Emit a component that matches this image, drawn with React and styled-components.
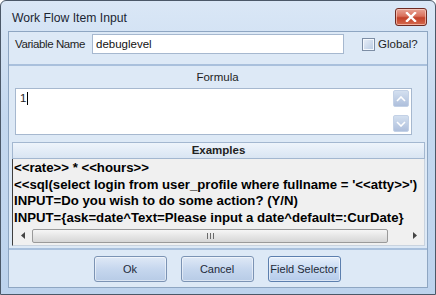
import React, { useState } from "react";
import styled, { createGlobalStyle } from "styled-components";

const GlobalStyle = createGlobalStyle`
  html, body {
    margin: 0;
    padding: 0;
    background: #ffffff;
  }
  * {
    box-sizing: border-box;
  }
`;

const examples = [
  "<<rate>> * <<hours>>",
  "<<sql(select login from user_profile where fullname = '<<atty>>')",
  "INPUT=Do you wish to do some action? (Y/N)",
  "INPUT={ask=date^Text=Please input a date^default=:CurDate}",
];

const App = () => {
  const [name, setName] = useState("debuglevel");
  const [isGlobal, setIsGlobal] = useState(false);

  return (
    <>
      <GlobalStyle />
      <Window>
        <TitleBar>
          <Title>Work Flow Item Input</Title>
          <CloseButton aria-label="Close">
            <svg width="12" height="10" viewBox="0 0 12 10">
              <path
                d="M2 1 L10 9 M10 1 L2 9"
                stroke="#ffffff"
                strokeWidth="2.4"
                strokeLinecap="square"
              />
            </svg>
          </CloseButton>
        </TitleBar>

        <Client>
          <NameRow>
            <Label>Variable Name</Label>
            <TextInput value={name} onChange={(e) => setName(e.target.value)} />
            <CheckLabel onClick={() => setIsGlobal(!isGlobal)}>
              <CheckBox checked={isGlobal} />
              Global?
            </CheckLabel>
          </NameRow>

          <FormulaSection>
            <SectionLabel>Formula</SectionLabel>
            <FormulaBox>
              <FormulaText>
                1<Caret />
              </FormulaText>
              <SpinColumn>
                <SpinButton>
                  <svg width="10" height="6" viewBox="0 0 10 6">
                    <path d="M1 5 L5 1 L9 5" fill="none" stroke="#ffffff" strokeWidth="1.6" />
                  </svg>
                </SpinButton>
                <SpinButton>
                  <svg width="10" height="6" viewBox="0 0 10 6">
                    <path d="M1 1 L5 5 L9 1" fill="none" stroke="#ffffff" strokeWidth="1.6" />
                  </svg>
                </SpinButton>
              </SpinColumn>
            </FormulaBox>
          </FormulaSection>

          <ExamplesSection>
            <ExamplesHeader>Examples</ExamplesHeader>
            <ExamplesBody>
              <ExampleList>
                {examples.map((line, index) => (
                  <ExampleLine key={index}>{line}</ExampleLine>
                ))}
              </ExampleList>
              <HScroll>
                <ScrollArrow>
                  <svg width="4" height="7" viewBox="0 0 4 7">
                    <path d="M4 0 L0 3.5 L4 7 Z" fill="#444" />
                  </svg>
                </ScrollArrow>
                <ScrollTrack>
                  <ScrollThumb>
                    <Grip />
                    <Grip />
                    <Grip />
                  </ScrollThumb>
                </ScrollTrack>
                <ScrollArrow>
                  <svg width="4" height="7" viewBox="0 0 4 7">
                    <path d="M0 0 L4 3.5 L0 7 Z" fill="#444" />
                  </svg>
                </ScrollArrow>
              </HScroll>
            </ExamplesBody>
          </ExamplesSection>

          <ButtonRow>
            <Button>Ok</Button>
            <Button>Cancel</Button>
            <Button active>Field Selector</Button>
          </ButtonRow>
        </Client>
      </Window>
    </>
  );
};

const uiFont = `"Liberation Sans", Arial, sans-serif`;

const Window = styled.div`
  width: 436px;
  height: 295px;
  display: flex;
  flex-direction: column;
  border: 1px solid #4b5868;
  border-radius: 6px 6px 0 0;
  background: linear-gradient(180deg, #dae7f6 0%, #c4d8ef 40%, #bdd3ed 100%);
  padding: 0 7px 6px 7px;
  font-family: ${uiFont};
  font-size: 11.5px;
  color: #1e1e1e;
`;

const TitleBar = styled.div`
  height: 30px;
  display: flex;
  align-items: center;
  justify-content: space-between;
  padding: 0 1px 0 4px;
`;

const Title = styled.span`
  font-size: 12.2px;
  color: #1b2533;
  margin-top: 3px;
`;

const CloseButton = styled.div`
  width: 32px;
  height: 18px;
  margin-top: 2px;
  display: flex;
  align-items: center;
  justify-content: center;
  border: 1px solid #6e2a22;
  border-radius: 3px;
  background: linear-gradient(180deg, #e8a496 0%, #d9705c 45%, #c2412a 55%, #d56a4e 100%);
  box-shadow: inset 0 0 0 1px rgba(255, 220, 210, 0.6);
`;

const Client = styled.div`
  flex: 1;
  display: flex;
  flex-direction: column;
  background: #dde9f6;
  border: 1px solid #8ea6c2;
`;

const NameRow = styled.div`
  height: 34px;
  display: flex;
  align-items: flex-start;
  padding: 2px 6px 0 6px;
  border-bottom: 2px solid #a9c0dc;
`;

const Label = styled.span`
  width: 77px;
  line-height: 20px;
  letter-spacing: -0.4px;
`;

const TextInput = styled.input`
  width: 252px;
  height: 20px;
  border: 1px solid #a6b8cf;
  background: #ffffff;
  font-family: ${uiFont};
  font-size: 11.5px;
  padding: 0 3px;
  color: #111;
  outline: none;
`;

const CheckLabel = styled.label`
  height: 20px;
  display: flex;
  align-items: center;
  gap: 3px;
  margin-left: 18px;
`;

const CheckBox = styled.span`
  width: 13px;
  height: 13px;
  border: 1px solid #7d8ea5;
  background: linear-gradient(135deg, #e9eff8 0%, #b8cbe3 100%);
  box-shadow: inset 0 0 0 1px #f4f8fd;
`;

const FormulaSection = styled.div`
  display: flex;
  flex-direction: column;
  padding: 0 15px 0 6px;
`;

const SectionLabel = styled.div`
  height: 22px;
  line-height: 22px;
  text-align: center;
  padding-left: 8px;
`;

const FormulaBox = styled.div`
  height: 47px;
  display: flex;
  justify-content: space-between;
  background: #ffffff;
  border: 1px solid #a6b8cf;
`;

const FormulaText = styled.div`
  padding: 3px 4px;
  display: flex;
  align-items: flex-start;
`;

const Caret = styled.span`
  width: 1px;
  height: 13px;
  margin-left: 1px;
  background: #000;
`;

const SpinColumn = styled.div`
  display: flex;
  flex-direction: column;
  justify-content: space-between;
  padding: 1px 2px 2px 0;
`;

const SpinButton = styled.div`
  width: 16px;
  height: 17px;
  display: flex;
  align-items: center;
  justify-content: center;
  border-radius: 2px;
  background: linear-gradient(180deg, #d4e0f0 0%, #aebfdc 100%);
  border: 1px solid #c3d1e6;
`;

const ExamplesSection = styled.div`
  display: flex;
  flex-direction: column;
  margin: 7px 2px 0 3px;
  height: 104px;
`;

const ExamplesHeader = styled.div`
  height: 17px;
  line-height: 15px;
  text-align: center;
  font-weight: bold;
  background: linear-gradient(180deg, #eef4fb 0%, #d9e5f3 100%);
  border: 1px solid #a3b7d0;
  color: #222;
`;

const ExamplesBody = styled.div`
  flex: 1;
  display: flex;
  flex-direction: column;
  justify-content: space-between;
  background: #f0f0f0;
  border-left: 1px solid #3f3f3f;
  border-right: 1px solid #c9d3df;
  border-bottom: 1px solid #c9d3df;
`;

const ExampleList = styled.div`
  padding: 1px 0 0 1px;
  white-space: nowrap;
  overflow: hidden;
`;

const ExampleLine = styled.div`
  font-family: "Liberation Sans", Arial, sans-serif;
  font-weight: bold;
  font-size: 13.2px;
  line-height: 16.5px;
  color: #000;
`;

const HScroll = styled.div`
  height: 15px;
  display: flex;
  align-items: center;
  margin-bottom: 2px;
`;

const ScrollArrow = styled.div`
  width: 19px;
  display: flex;
  justify-content: center;
  align-items: center;
`;

const ScrollTrack = styled.div`
  flex: 1;
  display: flex;
`;

const ScrollThumb = styled.div`
  width: 356px;
  height: 14px;
  display: flex;
  align-items: center;
  justify-content: center;
  gap: 2px;
  border: 1px solid #9a9a9a;
  border-radius: 2px;
  background: linear-gradient(180deg, #f6f6f6 0%, #e6e6e6 50%, #d6d6d6 100%);
`;

const Grip = styled.span`
  width: 1px;
  height: 6px;
  background: #6a6a6a;
`;

const ButtonRow = styled.div`
  flex: 1;
  display: flex;
  justify-content: center;
  align-items: center;
  gap: 14px;
  padding-right: 2px;
  margin-top: 2px;
  border-top: 2px solid #a9c0dc;
`;

const Button = styled.div`
  width: 73px;
  height: 26px;
  display: flex;
  align-items: center;
  justify-content: center;
  white-space: nowrap;
  font-size: 11px;
  color: #1e2a3a;
  border: 1px solid ${({ active }) => (active ? "#5c7fae" : "#7b93b4")};
  border-radius: 3px;
  background: ${({ active }) =>
    active
      ? "linear-gradient(180deg, #e6effb 0%, #c9dbf2 50%, #b5cbea 100%)"
      : "linear-gradient(180deg, #dfe9f6 0%, #c6d7ee 50%, #b7cbe6 100%)"};
  box-shadow: inset 0 0 0 1px rgba(255, 255, 255, 0.5);
`;

export default App;
